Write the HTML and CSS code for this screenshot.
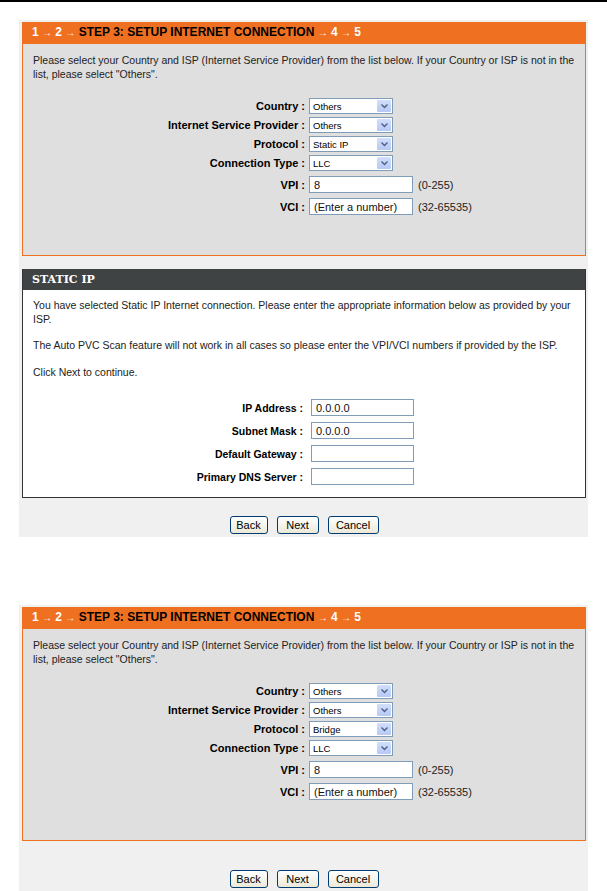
FILE: index.html
```html
<!DOCTYPE html>
<html lang="en">
<head>
    <meta charset="UTF-8">
    <title>Setup Internet Connection</title>
    <link rel="stylesheet" href="styles.css">
</head>
<body>

    <div class="page-rule"></div>

    <!-- Screen 1: Static IP -->
    <div class="shot shot-one">
        <div class="box box-orange">
            <div class="box-title">1 <span class="arr">&rarr;</span> 2 <span class="arr">&rarr;</span> <b>STEP 3: SETUP INTERNET CONNECTION</b> <span class="arr">&rarr;</span> 4 <span class="arr">&rarr;</span> 5</div>
            <p class="intro">Please select your Country and ISP (Internet Service Provider) from the list below. If your Country or ISP is not in the list, please select "Others".</p>
            <div class="form">
                <label>Country :</label>
                <div class="select"><span>Others</span><i class="drop"><svg width="7" height="5" viewBox="0 0 7 5"><path d="M0.5 0.5 L3.5 3.5 L6.5 0.5" fill="none" stroke="#4d6185" stroke-width="1.4"/></svg></i></div>
                <label>Internet Service Provider :</label>
                <div class="select"><span>Others</span><i class="drop"><svg width="7" height="5" viewBox="0 0 7 5"><path d="M0.5 0.5 L3.5 3.5 L6.5 0.5" fill="none" stroke="#4d6185" stroke-width="1.4"/></svg></i></div>
                <label>Protocol :</label>
                <div class="select"><span>Static IP</span><i class="drop"><svg width="7" height="5" viewBox="0 0 7 5"><path d="M0.5 0.5 L3.5 3.5 L6.5 0.5" fill="none" stroke="#4d6185" stroke-width="1.4"/></svg></i></div>
                <label>Connection Type :</label>
                <div class="select"><span>LLC</span><i class="drop"><svg width="7" height="5" viewBox="0 0 7 5"><path d="M0.5 0.5 L3.5 3.5 L6.5 0.5" fill="none" stroke="#4d6185" stroke-width="1.4"/></svg></i></div>
                <label class="tall">VPI :</label>
                <div class="field tall"><input type="text" value="8"><span class="hint">(0-255)</span></div>
                <label class="tall">VCI :</label>
                <div class="field tall"><input type="text" value="(Enter a number)"><span class="hint">(32-65535)</span></div>
            </div>
        </div>

        <div class="box box-dark">
            <div class="box-title">STATIC IP</div>
            <p class="first">You have selected Static IP Internet connection. Please enter the appropriate information below as provided by your ISP.</p>
            <p>The Auto PVC Scan feature will not work in all cases so please enter the VPI/VCI numbers if provided by the ISP.</p>
            <p>Click Next to continue.</p>
            <div class="form form-ip">
                <label>IP Address :</label>
                <div class="field"><input type="text" value="0.0.0.0"></div>
                <label>Subnet Mask :</label>
                <div class="field"><input type="text" value="0.0.0.0"></div>
                <label>Default Gateway :</label>
                <div class="field"><input type="text" value=""></div>
                <label>Primary DNS Server :</label>
                <div class="field"><input type="text" value=""></div>
            </div>
        </div>

        <div class="buttons">
            <button class="btn-back">Back</button>
            <button class="btn-next">Next</button>
            <button class="btn-cancel">Cancel</button>
        </div>
    </div>

    <!-- Screen 2: Bridge -->
    <div class="shot shot-two">
        <div class="box box-orange">
            <div class="box-title">1 <span class="arr">&rarr;</span> 2 <span class="arr">&rarr;</span> <b>STEP 3: SETUP INTERNET CONNECTION</b> <span class="arr">&rarr;</span> 4 <span class="arr">&rarr;</span> 5</div>
            <p class="intro">Please select your Country and ISP (Internet Service Provider) from the list below. If your Country or ISP is not in the list, please select "Others".</p>
            <div class="form">
                <label>Country :</label>
                <div class="select"><span>Others</span><i class="drop"><svg width="7" height="5" viewBox="0 0 7 5"><path d="M0.5 0.5 L3.5 3.5 L6.5 0.5" fill="none" stroke="#4d6185" stroke-width="1.4"/></svg></i></div>
                <label>Internet Service Provider :</label>
                <div class="select"><span>Others</span><i class="drop"><svg width="7" height="5" viewBox="0 0 7 5"><path d="M0.5 0.5 L3.5 3.5 L6.5 0.5" fill="none" stroke="#4d6185" stroke-width="1.4"/></svg></i></div>
                <label>Protocol :</label>
                <div class="select"><span>Bridge</span><i class="drop"><svg width="7" height="5" viewBox="0 0 7 5"><path d="M0.5 0.5 L3.5 3.5 L6.5 0.5" fill="none" stroke="#4d6185" stroke-width="1.4"/></svg></i></div>
                <label>Connection Type :</label>
                <div class="select"><span>LLC</span><i class="drop"><svg width="7" height="5" viewBox="0 0 7 5"><path d="M0.5 0.5 L3.5 3.5 L6.5 0.5" fill="none" stroke="#4d6185" stroke-width="1.4"/></svg></i></div>
                <label class="tall">VPI :</label>
                <div class="field tall"><input type="text" value="8"><span class="hint">(0-255)</span></div>
                <label class="tall">VCI :</label>
                <div class="field tall"><input type="text" value="(Enter a number)"><span class="hint">(32-65535)</span></div>
            </div>
        </div>

        <div class="buttons">
            <button class="btn-back">Back</button>
            <button class="btn-next">Next</button>
            <button class="btn-cancel">Cancel</button>
        </div>
    </div>

</body>
</html>
```

FILE: styles.css
```css
body {
    margin: 0;
    padding: 0;
    background: #fff;
    font-family: "Liberation Sans", Arial, sans-serif;
    font-size: 10.5px;
    color: #222;
}

.page-rule {
    height: 2px;
    background: #000;
}

/* one screenshot of the router page */
.shot {
    width: 564px;
    margin-left: 19px;
    padding: 2px 2px 3px 3px;
    background: #f0f0f0;
}

.shot-one {
    margin-top: 18px;
}

.shot-two {
    margin-top: 68px;
    height: 290px;
}

.box {
    box-sizing: border-box;
    width: 564px;
}

.box-title {
    height: 21px;
    line-height: 21px;
    padding-left: 9px;
    font-weight: bold;
    font-size: 12px;
    color: #fff;
}

.box-title b {
    color: #000;
}

.box-title .arr {
    font-weight: normal;
    font-size: 10px;
}

.box p {
    margin: 13px 0 0;
    padding: 0 10px;
    line-height: 13.5px;
}

.box-orange {
    height: 234px;
    border: 1px solid #f07022;
    border-top: 0;
    background: #dfdfdf;
}

.box-orange .box-title {
    height: 22px;
    background: #f07022;
}

.box-orange p.intro {
    margin-top: 10px;
}

.box-dark {
    margin-top: 13px;
    height: 229px;
    border: 1px solid #333;
    border-top: 0;
    background: #fff;
}

.box-dark .box-title {
    background: #404343;
    font-family: "DejaVu Serif", serif;
    font-size: 11px;
}

.box-dark p.first {
    margin-top: 9px;
}

/* label : control rows */
.form {
    display: grid;
    grid-template-columns: 282px 1fr;
    column-gap: 4px;
    row-gap: 3px;
    margin-top: 17px;
    align-items: center;
}

.form label {
    text-align: right;
    font-weight: bold;
    font-size: 11px;
    color: #000;
}

.form .tall {
    margin-top: 2px;
}

.select {
    display: flex;
    align-items: center;
    justify-content: space-between;
    box-sizing: border-box;
    width: 84px;
    height: 16px;
    padding: 1px;
    border: 1px solid #7f9db9;
    background: #fff;
    color: #000;
}

.select span {
    padding-left: 2px;
    font-size: 9.5px;
}

.drop {
    display: flex;
    align-items: center;
    justify-content: center;
    width: 14px;
    height: 12px;
    background: linear-gradient(#d2defb, #b6c9f5);
    border-radius: 1px;
}

.field {
    display: flex;
    align-items: center;
    gap: 5px;
}

.field input {
    box-sizing: border-box;
    width: 104px;
    height: 17px;
    margin: 0;
    padding: 0 4px;
    border: 1px solid #7f9db9;
    font-family: inherit;
    font-size: 11px;
    color: #111;
    background: #fff;
}

.hint {
    font-size: 11px;
}

.form-ip {
    grid-template-columns: 280px 1fr;
    column-gap: 8px;
    row-gap: 6px;
    margin-top: 20px;
}

.form-ip label {
    font-size: 10.5px;
}

.form-ip .field input {
    width: 103px;
}

/* Back / Next / Cancel */
.buttons {
    display: flex;
    justify-content: center;
    gap: 9px;
    margin-top: 18px;
}

.shot-two .buttons {
    margin-top: 29px;
}

.buttons button {
    height: 18px;
    padding: 0;
    border: 1px solid #003c74;
    border-radius: 3px;
    background: linear-gradient(#fff, #ece9d8);
    font-family: inherit;
    font-size: 11px;
    color: #000;
}

.buttons .btn-back {
    width: 38px;
}

.buttons .btn-next {
    width: 42px;
}

.buttons .btn-cancel {
    width: 51px;
}
```
